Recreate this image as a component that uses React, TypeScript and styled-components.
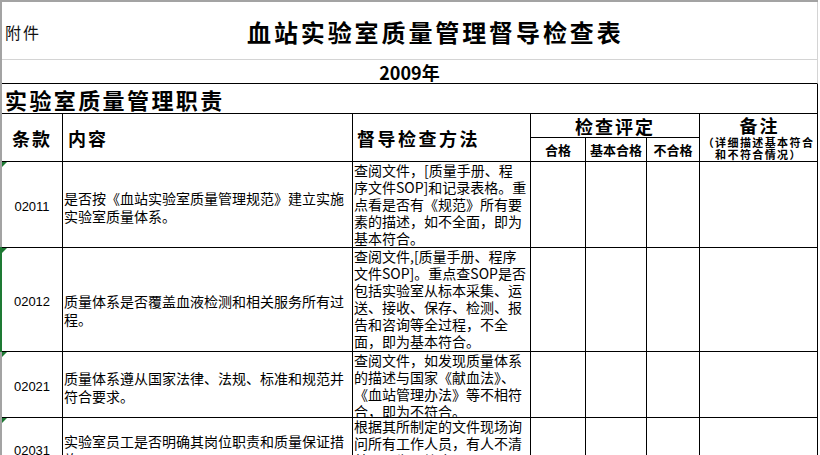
import React from "react";
import styled, { createGlobalStyle } from "styled-components";

const GlobalStyle = createGlobalStyle`
  html, body { margin: 0; padding: 0; background: #ffffff; }
  body { font-family: "Noto Sans CJK SC", "Noto Sans", sans-serif; color: #000; }
`;

const CJK = `"Noto Sans CJK SC", "Noto Sans", sans-serif`;

const Sheet = styled.div`
  width: 818px;
  box-sizing: border-box;
  border-left: 2px solid #a3a3a3;
  border-top: 2px solid #a3a3a3;
  font-family: ${CJK};
`;

const TitleRow = styled.div`
  height: 57px;
  display: flex;
  align-items: center;
  border-bottom: 1px solid #d4d4d4;
  border-right: 1px solid #d4d4d4;
`;

const AttachLabel = styled.div`
  width: 245px;
  flex-shrink: 0;
  box-sizing: border-box;
  padding: 2px 0 0 3px;
  font-size: 16px;
  letter-spacing: 2px;
  color: #111;
`;

const Title = styled.h1`
  margin: 0;
  padding-top: 2px;
  font-size: 24px;
  font-weight: 700;
  letter-spacing: 2.9px;
  line-height: 1;
`;

const YearRow = styled.div`
  height: 23px;
  display: flex;
  align-items: center;
  justify-content: center;
  border-bottom: 1px solid #000;
  border-right: 1px solid #d4d4d4;
  font-size: 18px;
  font-weight: 700;
  line-height: 1;
`;

const SectionRow = styled.div`
  height: 30px;
  display: flex;
  align-items: center;
  box-sizing: border-box;
  padding-left: 3px;
  border-bottom: 1px solid #000;
  border-right: 1px solid #000;
  font-size: 22px;
  font-weight: 700;
  letter-spacing: 2.4px;
  line-height: 1;
`;

const Grid = styled.div`
  display: grid;
  grid-template-columns: 60px 289px 177px 54px 60px 52px 117px;
  grid-template-rows: 23px 23px 85px 103px 65px 60px;
  gap: 1px;
  background: #000;
  border-right: 1px solid #000;
`;

const Cell = styled.div`
  background: #fff;
  overflow: hidden;
`;

const HeadCell = styled(Cell)<{ $rows?: number; $cols?: number; $align?: string; $pad?: number; $size?: number; $spacing?: number }>`
  grid-row: span ${(p) => p.$rows ?? 1};
  grid-column: span ${(p) => p.$cols ?? 1};
  display: flex;
  align-items: center;
  justify-content: ${(p) => p.$align ?? "center"};
  padding-left: ${(p) => p.$pad ?? 0}px;
  font-size: ${(p) => p.$size ?? 18}px;
  letter-spacing: ${(p) => p.$spacing ?? 2}px;
  font-weight: 700;
  line-height: 1;
  white-space: nowrap;
`;

const NoteHead = styled(Cell)`
  grid-row: span 2;
  display: flex;
  flex-direction: column;
  align-items: center;
  font-weight: 700;
`;

const NoteTitle = styled.div`
  font-size: 18px;
  line-height: 22px;
  letter-spacing: 2px;
  padding-left: 2px;
`;

const NoteSub = styled.div`
  font-size: 11px;
  line-height: 12px;
  letter-spacing: 1.4px;
  text-align: center;
  white-space: nowrap;
`;

const CodeCell = styled(Cell)<{ $selected?: boolean }>`
  position: relative;
  overflow: visible;
  display: flex;
  align-items: center;
  justify-content: center;
  padding-top: 4px;
  box-sizing: border-box;
  font-family: "Liberation Sans", Arial, sans-serif;
  font-size: 13px;
  &::before {
    content: "";
    position: absolute;
    top: 0;
    left: 0;
    border-top: 5px solid #1e7a34;
    border-right: 5px solid transparent;
  }
  &::after {
    content: "";
    display: ${(p) => (p.$selected ? "block" : "none")};
    position: absolute;
    left: -2px;
    top: -1px;
    bottom: -1px;
    width: 2px;
    background: #1e7a34;
  }
`;

const ContentCell = styled(Cell)<{ $shift: number }>`
  display: flex;
  flex-direction: column;
  justify-content: center;
  box-sizing: border-box;
  padding: ${(p) => p.$shift}px 0 0 1px;
  font-size: 14px;
  line-height: 18px;
`;

const MethodCell = styled(Cell)`
  padding-left: 1px;
  font-size: 14px;
  line-height: 17px;
`;

const Line = styled.span`
  display: block;
  white-space: nowrap;
`;

type Row = { code: string; content: string[]; shift: number; method: string[]; selected?: boolean };

const rows: Row[] = [
  {
    code: "02011",
    content: ["是否按《血站实验室质量管理规范》建立实施", "实验室质量体系。"],
    shift: 5,
    method: ["查阅文件，[质量手册、程", "序文件SOP]和记录表格。重", "点看是否有《规范》所有要", "素的描述，如不全面，即为", "基本符合。"],
  },
  {
    code: "02012",
    content: ["质量体系是否覆盖血液检测和相关服务所有过", "程。"],
    shift: 20,
    method: ["查阅文件,[质量手册、程序", "文件SOP]。重点查SOP是否", "包括实验室从标本采集、运", "送、接收、保存、检测、报", "告和咨询等全过程，不全", "面，即为基本符合。"],
    selected: true,
  },
  {
    code: "02021",
    content: ["质量体系遵从国家法律、法规、标准和规范并", "符合要求。"],
    shift: 4,
    method: ["查阅文件，如发现质量体系", "的描述与国家《献血法》、", "《血站管理办法》等不相符", "合，即为不符合。"],
  },
  {
    code: "02031",
    content: ["实验室员工是否明确其岗位职责和质量保证措", "施。"],
    shift: 4,
    method: ["根据其所制定的文件现场询", "问所有工作人员，有人不清", "楚，即为不符合。"],
  },
];

export default function App() {
  return (
    <>
      <GlobalStyle />
      <Sheet>
        <TitleRow>
          <AttachLabel>附件</AttachLabel>
          <Title>血站实验室质量管理督导检查表</Title>
        </TitleRow>
        <YearRow>2009年</YearRow>
        <SectionRow>实验室质量管理职责</SectionRow>
        <Grid>
          <HeadCell $rows={2}>条款</HeadCell>
          <HeadCell $rows={2} $align="flex-start" $pad={5}>内容</HeadCell>
          <HeadCell $rows={2} $align="flex-start" $pad={4} $spacing={2.5}>督导检查方法</HeadCell>
          <HeadCell $cols={3}>检查评定</HeadCell>
          <NoteHead>
            <NoteTitle>备注</NoteTitle>
            <NoteSub>（详细描述基本符合</NoteSub>
            <NoteSub>和不符合情况）</NoteSub>
          </NoteHead>
          <HeadCell $size={13} $spacing={0}>合格</HeadCell>
          <HeadCell $size={13} $spacing={0}>基本合格</HeadCell>
          <HeadCell $size={13} $spacing={0}>不合格</HeadCell>
          {rows.map((r) => (
            <React.Fragment key={r.code}>
              <CodeCell $selected={r.selected}>{r.code}</CodeCell>
              <ContentCell $shift={r.shift}>
                {r.content.map((l) => (
                  <Line key={l}>{l}</Line>
                ))}
              </ContentCell>
              <MethodCell>
                {r.method.map((l) => (
                  <Line key={l}>{l}</Line>
                ))}
              </MethodCell>
              <Cell />
              <Cell />
              <Cell />
              <Cell />
            </React.Fragment>
          ))}
        </Grid>
      </Sheet>
    </>
  );
}
